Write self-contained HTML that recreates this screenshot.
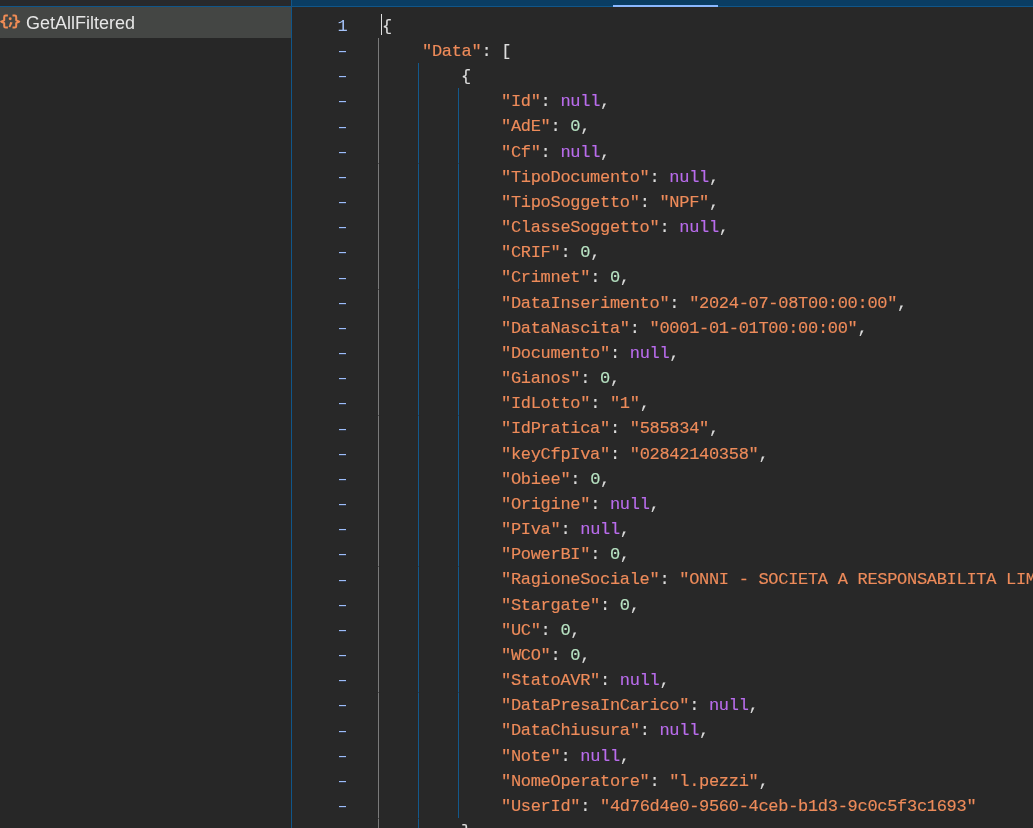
<!DOCTYPE html>
<html><head><meta charset="utf-8"><style>
html,body{margin:0;padding:0;width:1033px;height:828px;overflow:hidden;background:#282828;}
body{position:relative;font-family:"Liberation Sans",sans-serif;}
#side{position:absolute;left:0;top:0;width:291px;height:828px;background:#272727;}
#sidetop{position:absolute;left:0;top:0;width:291px;height:6px;background:#28292c;}
#hline{position:absolute;left:0;top:6px;width:1033px;height:1px;background:#10568a;}
#vline{position:absolute;left:291px;top:0;width:1px;height:828px;background:#10568a;}
#sel{position:absolute;left:0;top:7px;width:291px;height:31px;background:#444644;}
#sel .t{position:absolute;will-change:transform;left:26px;top:1px;font-size:18px;line-height:31px;color:#e6e6e6;transform:scaleY(1.07);transform-origin:0 21px;}
#etop{position:absolute;left:292px;top:0;width:741px;height:6px;background:#0a3d63;}
#hl{position:absolute;left:613px;top:5px;width:105px;height:2px;background:#8ab8ff;}
.ln{position:absolute;will-change:transform;left:300px;width:46.7px;text-align:right;font-family:"Liberation Mono",monospace;font-size:17px;line-height:25px;color:#76a6f4;}
.ln.one{color:#a6c4fa;left:300.7px}
.dash{position:absolute;left:339px;width:7px;height:1px;background:#9dbdfa;box-shadow:0 1px 0 rgba(110,150,230,0.2)}
.cd{position:absolute;will-change:transform;-webkit-text-stroke:0.15px currentColor;white-space:pre;font-family:"Liberation Mono",monospace;font-size:17px;letter-spacing:-0.3px;line-height:25px;color:#dcdcdc;}
.k,.s{color:#ee8b5a}.n{color:#b96cec}.g{color:#b8e3c3}.p{color:#dcdcdc}
.guide{position:absolute;width:1px;}
#cursor{position:absolute;left:381px;top:14px;width:1px;height:21px;background:#e0e0e0;}
</style></head><body>
<div id="side"></div>
<div id="sidetop"></div>
<div id="sel"><span class="t">GetAllFiltered</span></div>
<svg style="position:absolute;left:0;top:0" width="24" height="34" viewBox="0 0 24 34"><g fill="none" stroke="#f08c55" stroke-width="2" stroke-linejoin="round"><path d="M7.9 15.6H5.6Q4.2 15.6 4.2 17V20.3L1.2 21.7L4.2 23.1V26.2Q4.2 27.6 5.6 27.6H7.9"/><path d="M12.5 15.6H14.8Q16.2 15.6 16.2 17V20.3L19.2 21.7L16.2 23.1V26.2Q16.2 27.6 14.8 27.6H12.5"/></g><path d="M10.2 22.1L12.6 22.5L10.3 27.3L8.6 27.1Z" fill="#f08c55"/><circle cx="10.2" cy="18.7" r="1.45" fill="#f08c55"/></svg>
<div id="etop"></div>
<div id="hline"></div>
<div id="vline"></div>
<div id="hl"></div>
<div class="guide" style="left:378px;top:38px;height:790px;background:#7a7a7a"></div>
<div class="guide" style="left:378px;top:163px;height:1px;background:#4a4a4a"></div>
<div class="guide" style="left:378px;top:289px;height:1px;background:#4a4a4a"></div>
<div class="guide" style="left:378px;top:415px;height:1px;background:#4a4a4a"></div>
<div class="guide" style="left:378px;top:566px;height:1px;background:#4a4a4a"></div>
<div class="guide" style="left:378px;top:692px;height:1px;background:#4a4a4a"></div>
<div class="guide" style="left:378px;top:818px;height:1px;background:#4a4a4a"></div>
<div class="guide" style="left:418px;top:63px;height:765px;background:#13598c"></div>
<div class="guide" style="left:418px;top:163px;height:1px;background:#1f3f58"></div>
<div class="guide" style="left:418px;top:289px;height:1px;background:#1f3f58"></div>
<div class="guide" style="left:418px;top:415px;height:1px;background:#1f3f58"></div>
<div class="guide" style="left:418px;top:566px;height:1px;background:#1f3f58"></div>
<div class="guide" style="left:418px;top:692px;height:1px;background:#1f3f58"></div>
<div class="guide" style="left:418px;top:818px;height:1px;background:#1f3f58"></div>
<div class="guide" style="left:458px;top:88px;height:730px;background:#13598c"></div>
<div class="guide" style="left:458px;top:163px;height:1px;background:#1f3f58"></div>
<div class="guide" style="left:458px;top:289px;height:1px;background:#1f3f58"></div>
<div class="guide" style="left:458px;top:415px;height:1px;background:#1f3f58"></div>
<div class="guide" style="left:458px;top:566px;height:1px;background:#1f3f58"></div>
<div class="guide" style="left:458px;top:692px;height:1px;background:#1f3f58"></div>
<div id="cursor"></div>
<div class="ln one" style="top:13.70px">1</div>
<div class="cd" style="top:13.70px;left:382.00px"><span class="p">{</span></div>
<div class="dash" style="top:51px"></div>
<div class="cd" style="top:38.87px;left:421.60px"><span class="k">&quot;Data&quot;</span><span class="p">: [</span></div>
<div class="dash" style="top:76px"></div>
<div class="cd" style="top:64.03px;left:461.20px"><span class="p">{</span></div>
<div class="dash" style="top:101px"></div>
<div class="cd" style="top:89.20px;left:500.80px"><span class="k">&quot;Id&quot;</span><span class="p">: </span><span class="n">null</span><span class="p">,</span></div>
<div class="dash" style="top:127px"></div>
<div class="cd" style="top:114.37px;left:500.80px"><span class="k">&quot;AdE&quot;</span><span class="p">: </span><span class="g">0</span><span class="p">,</span></div>
<div class="dash" style="top:152px"></div>
<div class="cd" style="top:139.53px;left:500.80px"><span class="k">&quot;Cf&quot;</span><span class="p">: </span><span class="n">null</span><span class="p">,</span></div>
<div class="dash" style="top:177px"></div>
<div class="cd" style="top:164.70px;left:500.80px"><span class="k">&quot;TipoDocumento&quot;</span><span class="p">: </span><span class="n">null</span><span class="p">,</span></div>
<div class="dash" style="top:202px"></div>
<div class="cd" style="top:189.87px;left:500.80px"><span class="k">&quot;TipoSoggetto&quot;</span><span class="p">: </span><span class="s">&quot;NPF&quot;</span><span class="p">,</span></div>
<div class="dash" style="top:227px"></div>
<div class="cd" style="top:215.04px;left:500.80px"><span class="k">&quot;ClasseSoggetto&quot;</span><span class="p">: </span><span class="n">null</span><span class="p">,</span></div>
<div class="dash" style="top:252px"></div>
<div class="cd" style="top:240.20px;left:500.80px"><span class="k">&quot;CRIF&quot;</span><span class="p">: </span><span class="g">0</span><span class="p">,</span></div>
<div class="dash" style="top:278px"></div>
<div class="cd" style="top:265.37px;left:500.80px"><span class="k">&quot;Crimnet&quot;</span><span class="p">: </span><span class="g">0</span><span class="p">,</span></div>
<div class="dash" style="top:303px"></div>
<div class="cd" style="top:290.54px;left:500.80px"><span class="k">&quot;DataInserimento&quot;</span><span class="p">: </span><span class="s">&quot;2024-07-08T00:00:00&quot;</span><span class="p">,</span></div>
<div class="dash" style="top:328px"></div>
<div class="cd" style="top:315.70px;left:500.80px"><span class="k">&quot;DataNascita&quot;</span><span class="p">: </span><span class="s">&quot;0001-01-01T00:00:00&quot;</span><span class="p">,</span></div>
<div class="dash" style="top:353px"></div>
<div class="cd" style="top:340.87px;left:500.80px"><span class="k">&quot;Documento&quot;</span><span class="p">: </span><span class="n">null</span><span class="p">,</span></div>
<div class="dash" style="top:378px"></div>
<div class="cd" style="top:366.04px;left:500.80px"><span class="k">&quot;Gianos&quot;</span><span class="p">: </span><span class="g">0</span><span class="p">,</span></div>
<div class="dash" style="top:403px"></div>
<div class="cd" style="top:391.20px;left:500.80px"><span class="k">&quot;IdLotto&quot;</span><span class="p">: </span><span class="s">&quot;1&quot;</span><span class="p">,</span></div>
<div class="dash" style="top:429px"></div>
<div class="cd" style="top:416.37px;left:500.80px"><span class="k">&quot;IdPratica&quot;</span><span class="p">: </span><span class="s">&quot;585834&quot;</span><span class="p">,</span></div>
<div class="dash" style="top:454px"></div>
<div class="cd" style="top:441.54px;left:500.80px"><span class="k">&quot;keyCfpIva&quot;</span><span class="p">: </span><span class="s">&quot;02842140358&quot;</span><span class="p">,</span></div>
<div class="dash" style="top:479px"></div>
<div class="cd" style="top:466.71px;left:500.80px"><span class="k">&quot;Obiee&quot;</span><span class="p">: </span><span class="g">0</span><span class="p">,</span></div>
<div class="dash" style="top:504px"></div>
<div class="cd" style="top:491.87px;left:500.80px"><span class="k">&quot;Origine&quot;</span><span class="p">: </span><span class="n">null</span><span class="p">,</span></div>
<div class="dash" style="top:529px"></div>
<div class="cd" style="top:517.04px;left:500.80px"><span class="k">&quot;PIva&quot;</span><span class="p">: </span><span class="n">null</span><span class="p">,</span></div>
<div class="dash" style="top:554px"></div>
<div class="cd" style="top:542.21px;left:500.80px"><span class="k">&quot;PowerBI&quot;</span><span class="p">: </span><span class="g">0</span><span class="p">,</span></div>
<div class="dash" style="top:580px"></div>
<div class="cd" style="top:567.37px;left:500.80px"><span class="k">&quot;RagioneSociale&quot;</span><span class="p">: </span><span class="s">&quot;ONNI - SOCIETA A RESPONSABILITA LIMITATA&quot;</span><span class="p">,</span></div>
<div class="dash" style="top:605px"></div>
<div class="cd" style="top:592.54px;left:500.80px"><span class="k">&quot;Stargate&quot;</span><span class="p">: </span><span class="g">0</span><span class="p">,</span></div>
<div class="dash" style="top:630px"></div>
<div class="cd" style="top:617.71px;left:500.80px"><span class="k">&quot;UC&quot;</span><span class="p">: </span><span class="g">0</span><span class="p">,</span></div>
<div class="dash" style="top:655px"></div>
<div class="cd" style="top:642.88px;left:500.80px"><span class="k">&quot;WCO&quot;</span><span class="p">: </span><span class="g">0</span><span class="p">,</span></div>
<div class="dash" style="top:680px"></div>
<div class="cd" style="top:668.04px;left:500.80px"><span class="k">&quot;StatoAVR&quot;</span><span class="p">: </span><span class="n">null</span><span class="p">,</span></div>
<div class="dash" style="top:705px"></div>
<div class="cd" style="top:693.21px;left:500.80px"><span class="k">&quot;DataPresaInCarico&quot;</span><span class="p">: </span><span class="n">null</span><span class="p">,</span></div>
<div class="dash" style="top:731px"></div>
<div class="cd" style="top:718.38px;left:500.80px"><span class="k">&quot;DataChiusura&quot;</span><span class="p">: </span><span class="n">null</span><span class="p">,</span></div>
<div class="dash" style="top:756px"></div>
<div class="cd" style="top:743.54px;left:500.80px"><span class="k">&quot;Note&quot;</span><span class="p">: </span><span class="n">null</span><span class="p">,</span></div>
<div class="dash" style="top:781px"></div>
<div class="cd" style="top:768.71px;left:500.80px"><span class="k">&quot;NomeOperatore&quot;</span><span class="p">: </span><span class="s">&quot;l.pezzi&quot;</span><span class="p">,</span></div>
<div class="dash" style="top:806px"></div>
<div class="cd" style="top:793.88px;left:500.80px"><span class="k">&quot;UserId&quot;</span><span class="p">: </span><span class="s">&quot;4d76d4e0-9560-4ceb-b1d3-9c0c5f3c1693&quot;</span></div>
<div class="dash" style="top:831px"></div>
<div class="cd" style="top:819.04px;left:461.20px"><span class="p">}</span></div>
</body></html>
